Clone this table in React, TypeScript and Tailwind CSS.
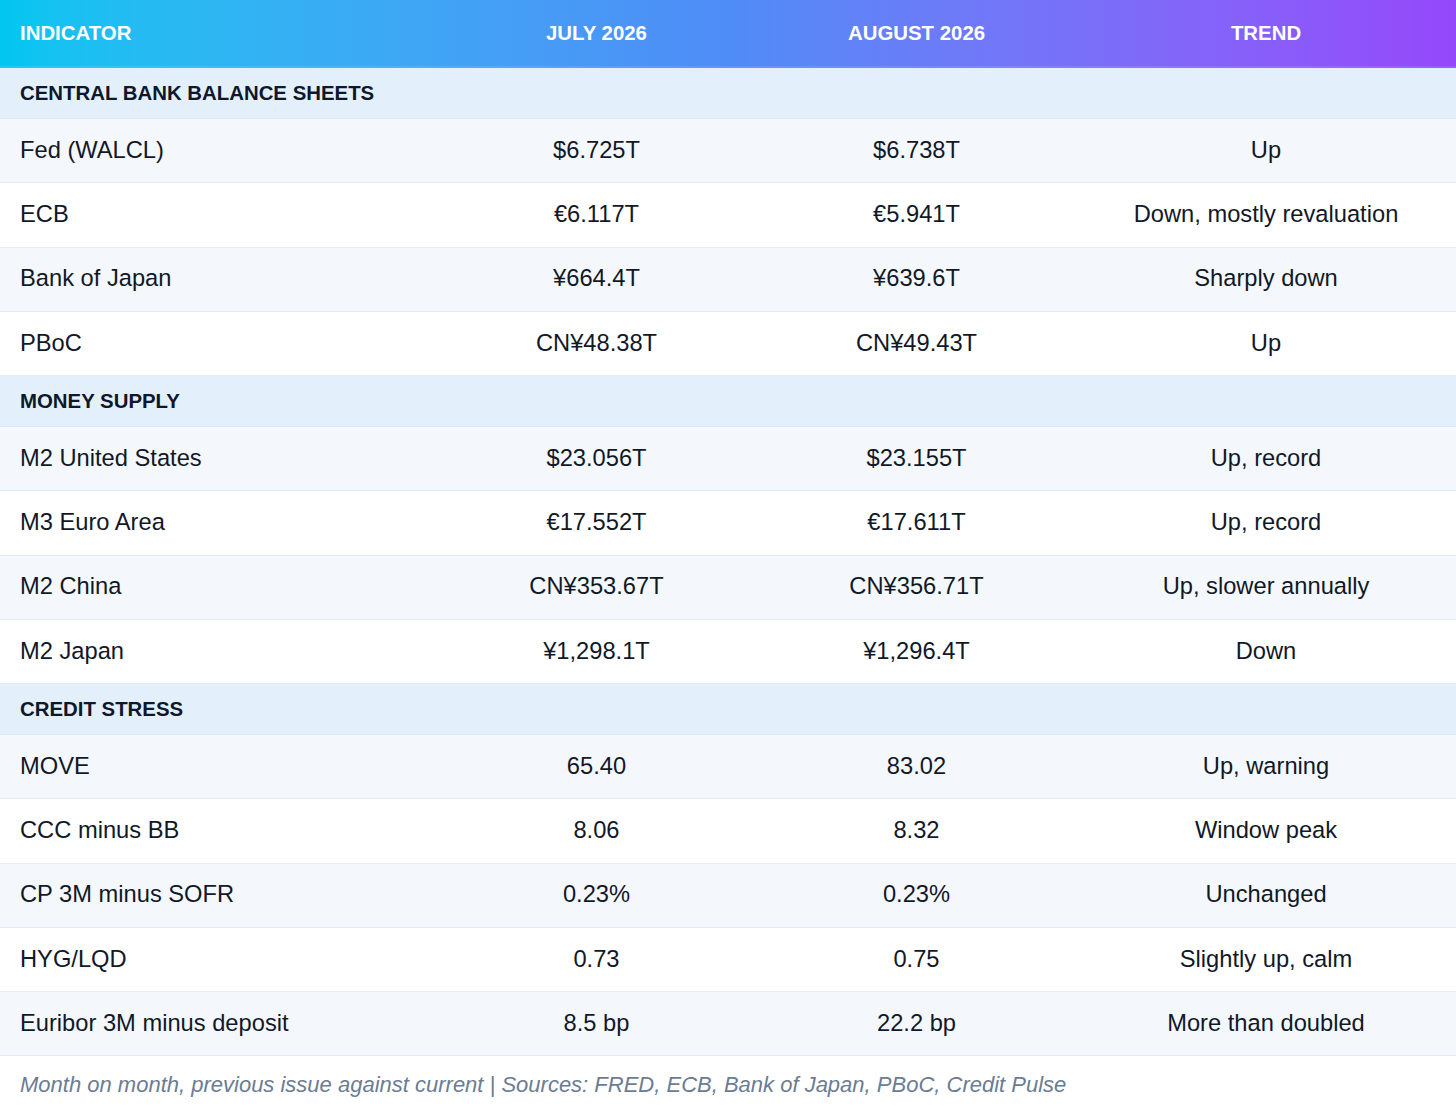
type Row = { name: string; jul: string; aug: string; trend: string };
type Section = { title: string; rows: Row[] };

const sections: Section[] = [
  {
    title: 'CENTRAL BANK BALANCE SHEETS',
    rows: [
      { name: 'Fed (WALCL)', jul: '$6.725T', aug: '$6.738T', trend: 'Up' },
      { name: 'ECB', jul: '€6.117T', aug: '€5.941T', trend: 'Down, mostly revaluation' },
      { name: 'Bank of Japan', jul: '¥664.4T', aug: '¥639.6T', trend: 'Sharply down' },
      { name: 'PBoC', jul: 'CN¥48.38T', aug: 'CN¥49.43T', trend: 'Up' },
    ],
  },
  {
    title: 'MONEY SUPPLY',
    rows: [
      { name: 'M2 United States', jul: '$23.056T', aug: '$23.155T', trend: 'Up, record' },
      { name: 'M3 Euro Area', jul: '€17.552T', aug: '€17.611T', trend: 'Up, record' },
      { name: 'M2 China', jul: 'CN¥353.67T', aug: 'CN¥356.71T', trend: 'Up, slower annually' },
      { name: 'M2 Japan', jul: '¥1,298.1T', aug: '¥1,296.4T', trend: 'Down' },
    ],
  },
  {
    title: 'CREDIT STRESS',
    rows: [
      { name: 'MOVE', jul: '65.40', aug: '83.02', trend: 'Up, warning' },
      { name: 'CCC minus BB', jul: '8.06', aug: '8.32', trend: 'Window peak' },
      { name: 'CP 3M minus SOFR', jul: '0.23%', aug: '0.23%', trend: 'Unchanged' },
      { name: 'HYG/LQD', jul: '0.73', aug: '0.75', trend: 'Slightly up, calm' },
      { name: 'Euribor 3M minus deposit', jul: '8.5 bp', aug: '22.2 bp', trend: 'More than doubled' },
    ],
  },
];

const cols = 'grid grid-cols-[436px_321px_319px_380px]';

export default function App() {
  return (
    <div className="w-[1456px] min-h-[1114px] bg-white text-[#111827] font-['Liberation_Sans',Arial,sans-serif]">
      {/* Header */}
      <div className={`${cols} h-[68px] items-center bg-linear-to-r from-[#00c6f0] via-[#4f8cf7] to-[#9448fa] border-b-2 border-white/10 text-white text-[20.4px] font-bold`}>
        <div className="pl-5">INDICATOR</div>
        <div className="text-center">JULY 2026</div>
        <div className="text-center">AUGUST 2026</div>
        <div className="text-center">TREND</div>
      </div>

      {sections.map((sec) => (
        <div key={sec.title}>
          <div className="h-[51px] flex items-center pl-5 bg-[#e3f0fc] border-b border-[#dbe8f5] text-[20.4px] font-bold text-[#0f172a]">
            {sec.title}
          </div>
          {sec.rows.map((r, i) => (
            <div
              key={r.name}
              className={`${cols} h-[64.25px] items-center border-b border-[#e3ecf5] text-[23.7px] ${i % 2 === 0 ? 'bg-[#f4f8fd]' : 'bg-white'}`}
            >
              <div className="pl-5">{r.name}</div>
              <div className="text-center">{r.jul}</div>
              <div className="text-center">{r.aug}</div>
              <div className="text-center">{r.trend}</div>
            </div>
          ))}
        </div>
      ))}

      {/* Footer note */}
      <div className="h-[57px] flex items-center pl-5 text-[22px] italic text-[#6b7c93]">
        Month on month, previous issue against current | Sources: FRED, ECB, Bank of Japan, PBoC, Credit Pulse
      </div>
    </div>
  );
}
